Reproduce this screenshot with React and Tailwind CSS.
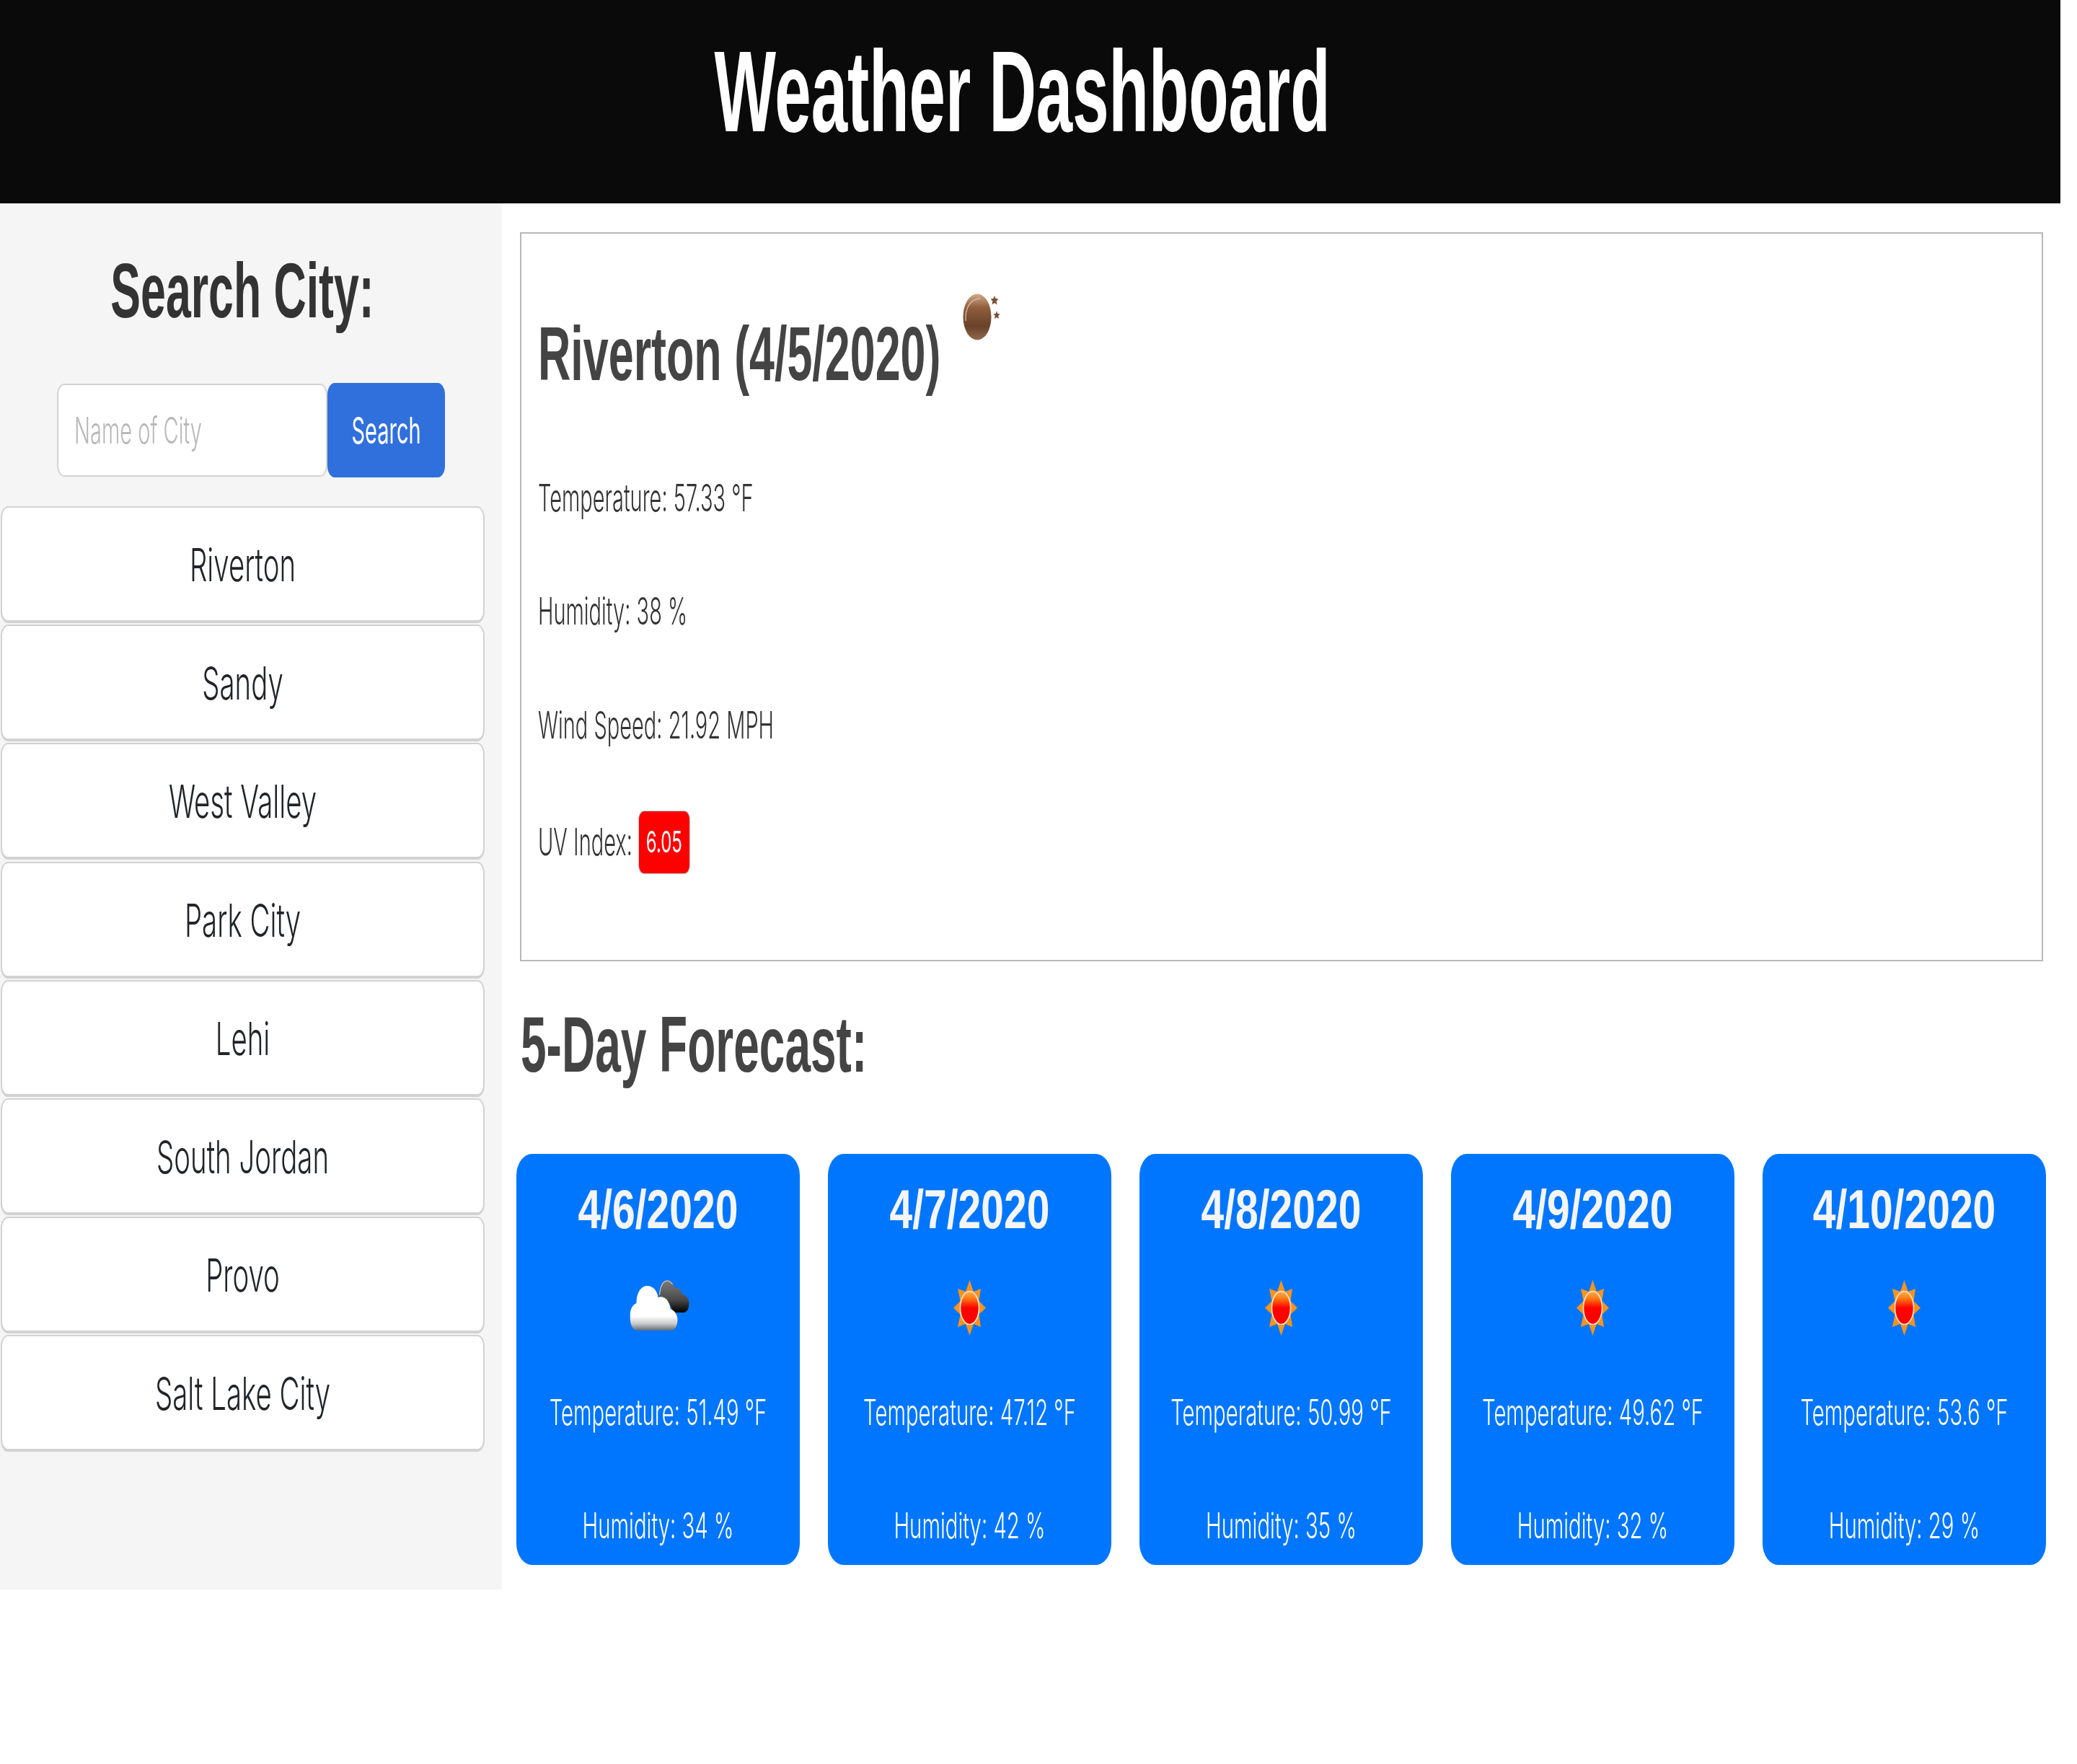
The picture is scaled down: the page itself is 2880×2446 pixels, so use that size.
const cities = ["Riverton", "Sandy", "West Valley", "Park City", "Lehi", "South Jordan", "Provo", "Salt Lake City"];
const forecast = [
  { date: "4/6/2020", icon: "cloud", temp: "51.49", hum: "34" },
  { date: "4/7/2020", icon: "sun", temp: "47.12", hum: "42" },
  { date: "4/8/2020", icon: "sun", temp: "50.99", hum: "35" },
  { date: "4/9/2020", icon: "sun", temp: "49.62", hum: "32" },
  { date: "4/10/2020", icon: "sun", temp: "53.6", hum: "29" },
];

function Moon() {
  return (
    <svg viewBox="0 0 50 65" preserveAspectRatio="none" className="block h-[65px] w-[50px] shrink-0 overflow-visible blur-[0.5px]">
      <defs>
        <linearGradient id="moonFill" x1="0" y1="0" x2="0" y2="1">
          <stop offset="0" stopColor="#d3aa8a" />
          <stop offset="0.3" stopColor="#8f5e3c" />
          <stop offset="0.7" stopColor="#68422a" />
          <stop offset="1" stopColor="#91674a" />
        </linearGradient>
      </defs>
      <ellipse cx="20" cy="32.5" rx="19.5" ry="32" fill="url(#moonFill)" />
      <path d="M4 38 C3 20 10 8 24 7" fill="none" stroke="#ecd3bf" strokeWidth="1.6" opacity="0.7" />
      <polygon points="44,3 45.6,7 49.5,7.5 46.6,10.5 47.5,15.5 44,13 40.5,15.5 41.4,10.5 38.5,7.5 42.4,7" fill="#7a4f35" />
      <polygon points="47,24 48.2,27.8 51.5,28.2 49.2,30.8 50,35 47,33 44,35 44.8,30.8 42.5,28.2 45.8,27.8" fill="#7a4f35" />
    </svg>
  );
}

function Cloud({ i }) {
  return (
    <svg viewBox="0 0 82 70" preserveAspectRatio="none" className="block h-[70px] w-[82px] translate-x-[1.5px] blur-[0.5px]">
      <defs>
        <linearGradient id={`cloudBack${i}`} x1="0" y1="0" x2="0" y2="1">
          <stop offset="0" stopColor="#7c7c7c" />
          <stop offset="0.6" stopColor="#4a4a4a" />
          <stop offset="1" stopColor="#000000" />
        </linearGradient>
        <linearGradient id={`cloudFront${i}`} x1="0" y1="0" x2="0" y2="1">
          <stop offset="0" stopColor="#ffffff" />
          <stop offset="0.68" stopColor="#ffffff" />
          <stop offset="0.85" stopColor="#c8c8c8" />
          <stop offset="1" stopColor="#5f6a78" />
        </linearGradient>
      </defs>
      <path d="M40 22 C41 8 46 0 51 0 C57 0 61 5 62 11 C67 9 71 13 72 20 C78 20 82 26 82 32 C82 39 79 45 74 45 L60 45 C58 35 50 28 40 24 Z" fill={`url(#cloudBack${i})`} />
      <path d="M41 21 C42 9 46 2 51 1 C54 1 57 3 59 6" fill="none" stroke="#c9c9c9" strokeWidth="1.2" />
      <path d="M10 70 C3 70 0 60 0 50 C0 40 4 34 9 32 C9 18 15 8 24 8 C33 8 38 16 39 24 C44 22 50 24 53 30 C55 33 56 37 56 40 C62 42 66 48 66 55 C66 64 62 70 56 70 Z" fill={`url(#cloudFront${i})`} />
    </svg>
  );
}

function Sun({ i }) {
  return (
    <svg viewBox="0 0 45 77" preserveAspectRatio="none" className="block h-[77px] w-[45px] blur-[0.4px]">
      <defs>
        <linearGradient id={`sunFill${i}`} x1="0" y1="0" x2="0" y2="1">
          <stop offset="0" stopColor="#ffb060" />
          <stop offset="0.22" stopColor="#ff7a10" />
          <stop offset="0.5" stopColor="#ff0000" />
          <stop offset="1" stopColor="#fb0000" />
        </linearGradient>
      </defs>
      <polygon
        points="22.5,0 27.9,16.1 38,12 35.4,29.1 45,38.5 35.4,47.7 38,65 27.9,60.7 22.5,77 17,60.7 6,65 9.6,47.7 0,38.5 9.6,29.1 6,12 17,16.1"
        fill="#f7941e"
      />
      <ellipse cx="22.5" cy="38.5" rx="13" ry="23" fill={`url(#sunFill${i})`} stroke="#ffe6cc" strokeWidth="1.6" />
    </svg>
  );
}

export default function App() {
  return (
    <div className="min-h-[2446px] w-[2857px] bg-white font-['Inter',sans-serif] font-[350] text-[#333333]">
      <header className="flex h-[282px] items-center justify-center bg-[#0a0a0a] pb-[28px] pr-[22px]">
        <h1 className="inline-block origin-center scale-y-[1.76] whitespace-nowrap font-['Liberation_Sans',sans-serif] text-[90.6px] font-bold leading-[90px] text-white">
          Weather Dashboard
        </h1>
      </header>

      <div className="flex">
        <aside className="h-[1922px] w-[696px] shrink-0 bg-[#f5f5f5] pt-[60px]">
          <div className="flex h-[120px] w-[672px] items-center justify-center">
            <h2 className="inline-block scale-y-[1.71] whitespace-nowrap font-['Liberation_Sans',sans-serif] text-[62.6px] font-bold leading-[62px] text-[#333333]">
              Search City:
            </h2>
          </div>

          <form className="ml-[79px] mt-[69px] flex h-[131px] items-center">
            <div className="flex h-[129px] w-[375px] items-center rounded-[10px/16px] border-2 border-[#d4d4d4] bg-white pl-[22px]">
              <input
                placeholder="Name of City"
                className="h-[40px] w-[300px] origin-left scale-y-[1.75] bg-transparent text-[29px] font-light outline-none placeholder:text-[#b8b8b8]"
              />
            </div>
            <button type="button" className="flex h-[131px] w-[163px] items-center justify-center rounded-[10px/16px] bg-[#3070dc] text-[29px] font-normal leading-[40px] text-white">
              <span className="inline-block scale-y-[1.75]">Search</span>
            </button>
          </form>

          <ul className="ml-[1px] mt-[40px] flex w-[671px] flex-col gap-[2.2px]">
            {cities.map((c) => (
              <li key={c} className="flex h-[162px] items-center justify-center rounded-[10px/16px] border-2 border-b-[4px] border-[#d2d2d2] bg-white pt-[2px] text-[38.4px] leading-[40px] text-[#212529]">
                <span className="inline-block scale-y-[1.66] whitespace-nowrap">{c}</span>
              </li>
            ))}
          </ul>
        </aside>

        <main className="flex-1 pl-[25px] pt-[40px]">
          <section className="h-[1011px] w-[2112px] border-2 border-[#b8b8b8] bg-white pl-[23px] pt-[126px]">
            <div className="flex h-[80px] items-center">
              <h2 className="inline-block scale-y-[1.67] whitespace-nowrap font-['Liberation_Sans',sans-serif] text-[62.8px] font-bold leading-[64px] text-[#444444]">
                Riverton (4/5/2020)
              </h2>
              <div className="-mt-[101px] ml-[31px]">
                <Moon />
              </div>
            </div>
            <div className="mt-[131px] flex h-[60px] items-center text-[29px] leading-[30px]">
              <span className="inline-block scale-y-[1.81] whitespace-nowrap">Temperature: 57.33 °F</span>
            </div>
            <div className="mt-[97px] flex h-[60px] items-center text-[29px] leading-[30px]">
              <span className="inline-block scale-y-[1.81] whitespace-nowrap">Humidity: 38 %</span>
            </div>
            <div className="mt-[98px] flex h-[60px] items-center text-[29px] leading-[30px]">
              <span className="inline-block scale-y-[1.81] whitespace-nowrap">Wind Speed: 21.92 MPH</span>
            </div>
            <div className="mt-[88px] flex h-[88px] items-center text-[29px] leading-[30px]">
              <span className="inline-block scale-y-[1.81] whitespace-nowrap">UV Index:</span>
              <span className="ml-[8px] flex h-[88px] w-[72px] items-center justify-center rounded-[8px/12px] border border-[#b9d4d6] bg-[#ff0000] text-[24px] font-normal leading-[30px] text-white">
                <span className="inline-block scale-y-[1.72]">6.05</span>
              </span>
            </div>
          </section>

          <div className="mt-[76px] flex h-[80px] items-center pl-[1px]">
            <h2 className="inline-block scale-y-[1.7] whitespace-nowrap font-['Liberation_Sans',sans-serif] text-[64px] font-bold leading-[64px] text-[#444444]">
              5-Day Forecast:
            </h2>
          </div>

          <div className="-ml-[5px] mt-[111px] flex gap-[39px]">
            {forecast.map((d, i) => (
              <article key={d.date} className="flex h-[570px] w-[393px] flex-col items-center rounded-[22px/30px] bg-[#0076ff] pt-[46px] text-white">
                <div className="flex h-[60px] items-center">
                  <h4 className="inline-block scale-y-[1.33] whitespace-nowrap font-['Liberation_Sans',sans-serif] text-[57px] font-bold leading-[60px] text-[#f5f5f5]">
                    {d.date}
                  </h4>
                </div>
                <div className="mt-[69px] h-[77px]">
                  {d.icon === "cloud" ? <Cloud i={i} /> : <Sun i={i} />}
                </div>
                <div className="mt-[87px] flex h-[40px] items-center text-[29.3px] leading-[30px]">
                  <span className="inline-block scale-y-[1.68] whitespace-nowrap">Temperature: {d.temp} °F</span>
                </div>
                <div className="mt-[117px] flex h-[40px] items-center text-[29.3px] leading-[30px]">
                  <span className="inline-block scale-y-[1.68] whitespace-nowrap">Humidity: {d.hum} %</span>
                </div>
              </article>
            ))}
          </div>
        </main>
      </div>
    </div>
  );
}
